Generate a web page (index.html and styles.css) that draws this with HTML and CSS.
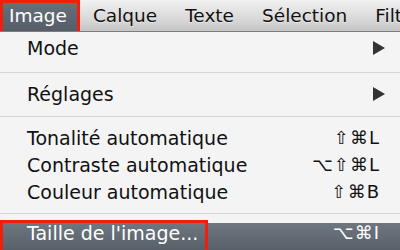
FILE: index.html
```html
<!DOCTYPE html>
<html lang="fr">
<head>
  <meta charset="UTF-8">
  <title>Menu Image</title>
  <link rel="stylesheet" href="styles.css">
</head>
<body>

  <!-- Menu bar -->
  <div class="menu-bar">
    <span class="menu-title active">Image</span>
    <span class="menu-title">Calque</span>
    <span class="menu-title">Texte</span>
    <span class="menu-title">Sélection</span>
    <span class="menu-title">Filtre</span>
  </div>

  <!-- Dropdown -->
  <div class="dropdown">
    <div class="menu-item">
      <span class="item-label">Mode</span>
      <svg class="submenu-arrow" width="12" height="14" viewBox="0 0 12 14"><polygon points="0,0 12,7 0,14" fill="#333"/></svg>
    </div>

    <div class="separator sep-first"></div>

    <div class="menu-item">
      <span class="item-label">Réglages</span>
      <svg class="submenu-arrow" width="12" height="14" viewBox="0 0 12 14"><polygon points="0,0 12,7 0,14" fill="#333"/></svg>
    </div>

    <div class="separator"></div>

    <div class="menu-item">
      <span class="item-label">Tonalité automatique</span>
      <span class="shortcut">⇧⌘L</span>
    </div>
    <div class="menu-item">
      <span class="item-label">Contraste automatique</span>
      <span class="shortcut">⌥⇧⌘L</span>
    </div>
    <div class="menu-item">
      <span class="item-label">Couleur automatique</span>
      <span class="shortcut">⇧⌘B</span>
    </div>

    <div class="separator sep-last"></div>

    <div class="menu-item selected">
      <span class="item-label boxed">Taille de l'image...</span>
      <span class="shortcut">⌥⌘I</span>
    </div>
  </div>

</body>
</html>
```

FILE: styles.css
```css
* {
  margin: 0;
  padding: 0;
  box-sizing: border-box;
}

body {
  font-family: "DejaVu Sans", "Liberation Sans", sans-serif;
  background: #f4f4f4;
  width: 400px;
  height: 250px;
  overflow: hidden;
  color: #111;
}

/* Menu bar */
.menu-bar {
  display: flex;
  height: 32px;
  padding-left: 3px;
  overflow: hidden;
  background: linear-gradient(#f1f1f1, #d9d9d9 60%, #c6c6c6);
  border-bottom: 1px solid #7d7d7d;
  white-space: nowrap;
}

.menu-title {
  padding: 0 14px;
  font-size: 18.5px;
  line-height: 31px;
  color: #111;
  text-shadow: 0 1px 0 rgba(255, 255, 255, 0.5);
}

.menu-title.active {
  margin-top: 3px;
  margin-right: 2px;
  height: 28px;
  line-height: 25px;
  padding: 0 10px 0 6px;
  background: linear-gradient(#66707a, #555e68);
  color: #fff;
  text-shadow: none;
  outline: 3px solid #f21d0a;
}

/* Dropdown */
.dropdown {
  padding-top: 2px;
}

.menu-item {
  display: flex;
  align-items: center;
  justify-content: space-between;
  height: 27px;
  padding: 0 15px 0 27px;
  font-size: 19px;
  white-space: nowrap;
}

.submenu-arrow {
  display: block;
}

.shortcut {
  padding-right: 5px;
  font-size: 18px;
  letter-spacing: 1px;
}

.separator {
  height: 1px;
  background: #d6d6d6;
  margin: 9px 0 7px;
}

.separator.sep-first {
  margin-top: 11px;
}

.separator.sep-last {
  margin: 8px 0 9px;
}

.menu-item.selected {
  padding-left: 3px;
  align-items: flex-start;
  background: linear-gradient(#6e7680, #58606a);
  color: #fff;
}

.item-label.boxed {
  width: 202px;
  height: 30px;
  padding-left: 24px;
  line-height: 20px;
  outline: 3px solid #f21d0a;
}

.menu-item.selected .shortcut {
  line-height: 20px;
}
```
